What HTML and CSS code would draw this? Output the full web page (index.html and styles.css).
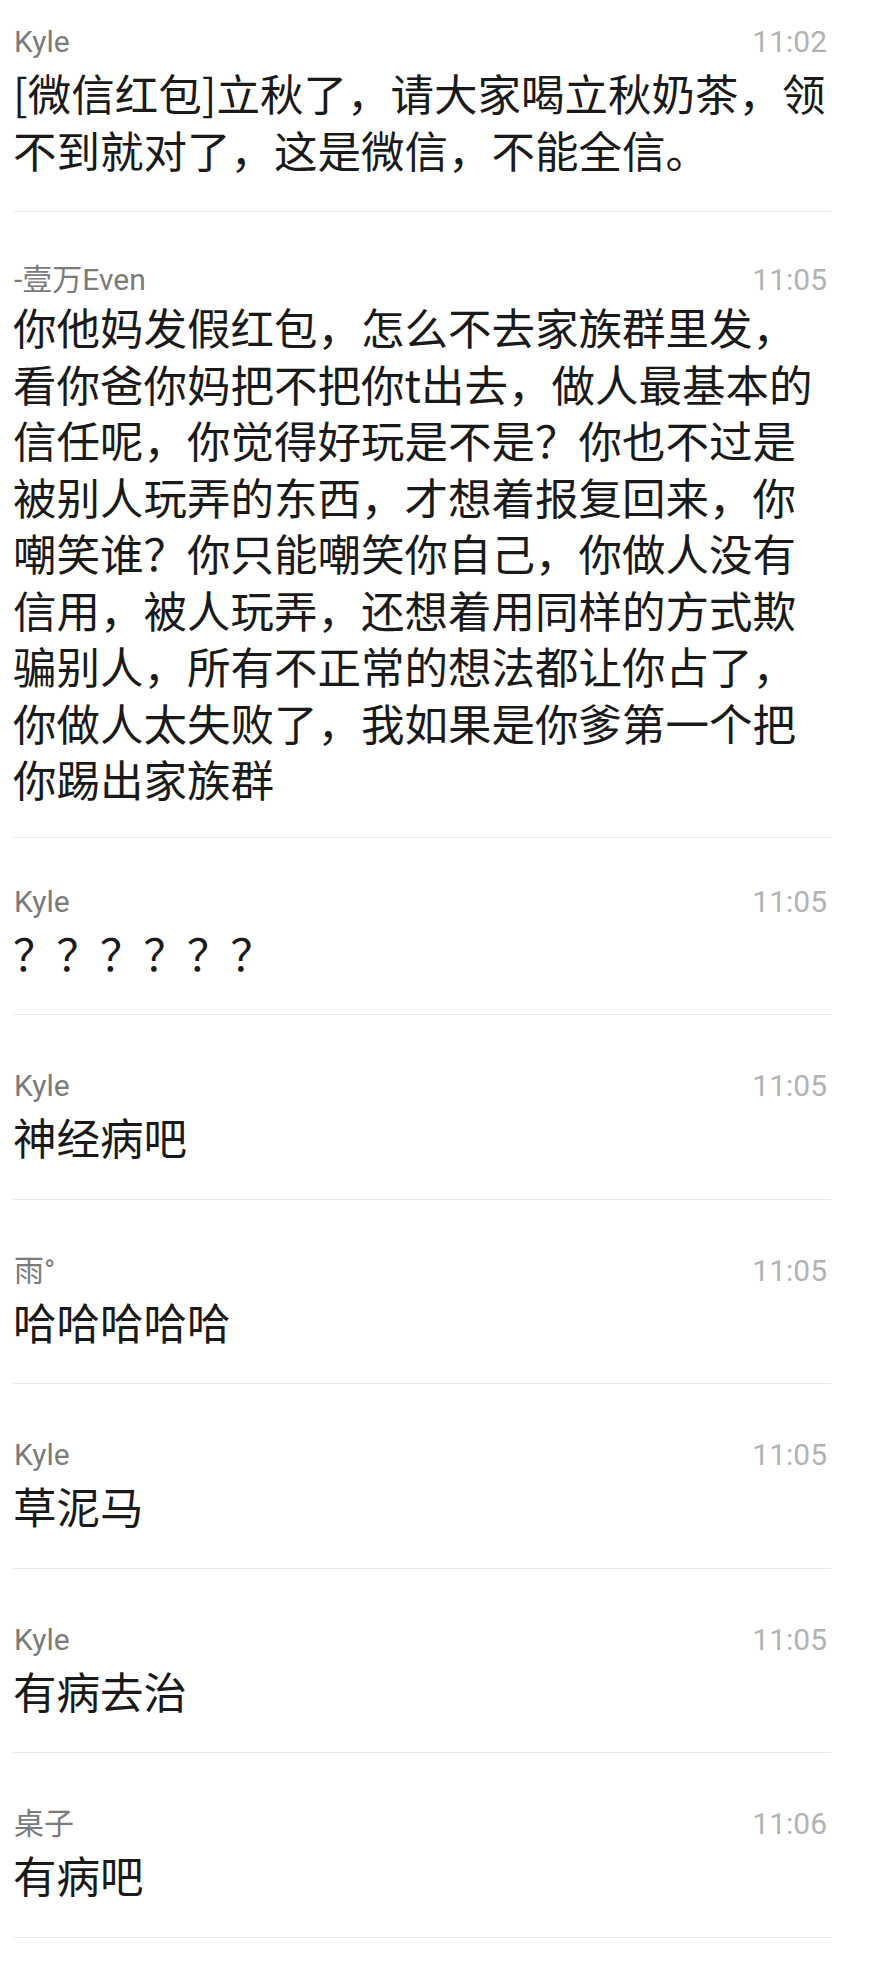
FILE: index.html
```html
<!DOCTYPE html>
<html lang="zh-CN">
<head>
    <meta charset="UTF-8">
    <meta name="viewport" content="width=device-width, initial-scale=1.0">
    <title>聊天记录</title>
    <link rel="stylesheet" href="styles.css">
</head>
<body>
    <div class="msg-list">
        <div class="msg">
            <div class="msg-head">
                <span class="msg-name">Kyle</span>
                <span class="msg-time">11:02</span>
            </div>
            <p class="msg-text">[微信红包]立秋了，请大家喝立秋奶茶，领不到就对了，这是微信，不能全信。</p>
        </div>

        <div class="msg msg--dense">
            <div class="msg-head">
                <span class="msg-name">-壹万Even</span>
                <span class="msg-time">11:05</span>
            </div>
            <p class="msg-text">你他妈发假红包，怎么不去家族群里发，看你爸你妈把不把你t出去，做人最基本的信任呢，你觉得好玩是不是？你也不过是被别人玩弄的东西，才想着报复回来，你嘲笑谁？你只能嘲笑你自己，你做人没有信用，被人玩弄，还想着用同样的方式欺骗别人，所有不正常的想法都让你占了，你做人太失败了，我如果是你爹第一个把你踢出家族群</p>
        </div>

        <div class="msg msg--snug">
            <div class="msg-head">
                <span class="msg-name">Kyle</span>
                <span class="msg-time">11:05</span>
            </div>
            <p class="msg-text">？？？？？？</p>
        </div>

        <div class="msg">
            <div class="msg-head">
                <span class="msg-name">Kyle</span>
                <span class="msg-time">11:05</span>
            </div>
            <p class="msg-text">神经病吧</p>
        </div>

        <div class="msg">
            <div class="msg-head">
                <span class="msg-name">雨°</span>
                <span class="msg-time">11:05</span>
            </div>
            <p class="msg-text">哈哈哈哈哈</p>
        </div>

        <div class="msg">
            <div class="msg-head">
                <span class="msg-name">Kyle</span>
                <span class="msg-time">11:05</span>
            </div>
            <p class="msg-text">草泥马</p>
        </div>

        <div class="msg">
            <div class="msg-head">
                <span class="msg-name">Kyle</span>
                <span class="msg-time">11:05</span>
            </div>
            <p class="msg-text">有病去治</p>
        </div>

        <div class="msg">
            <div class="msg-head">
                <span class="msg-name">桌子</span>
                <span class="msg-time">11:06</span>
            </div>
            <p class="msg-text">有病吧</p>
        </div>
    </div>
</body>
</html>
```

FILE: styles.css
```css
* {
    margin: 0;
    padding: 0;
    box-sizing: border-box;
}

body {
    font-family: Roboto, "Noto Sans CJK SC", sans-serif;
    background: #fff;
    color: #1c1c1c;
}

.msg-list {
    margin: 0 38px 0 13px;
}

.msg {
    padding: 57px 0 33px;
    border-bottom: 1px solid #e9e9e9;
}

.msg:first-child {
    padding-top: 28px;
}

/* 截图拼接处，间距略紧 */
.msg--dense {
    padding-top: 54px;
    padding-bottom: 29px;
}

.msg--dense .msg-head {
    margin-bottom: 5px;
}

.msg--snug {
    padding-top: 50px;
}

.msg-head {
    display: flex;
    justify-content: space-between;
    align-items: baseline;
    margin-bottom: 9px;
    font-size: 30px;
    line-height: 28px;
}

.msg-name {
    color: #7b7b7b;
    padding-left: 1px;
}

.msg-time {
    color: #b3b3b3;
    margin-right: 4px;
}

.msg-text {
    font-family: "Noto Sans CJK SC", sans-serif;
    font-size: 43.5px;
    line-height: 56.5px;
    color: #1a1a1a;
}
```
